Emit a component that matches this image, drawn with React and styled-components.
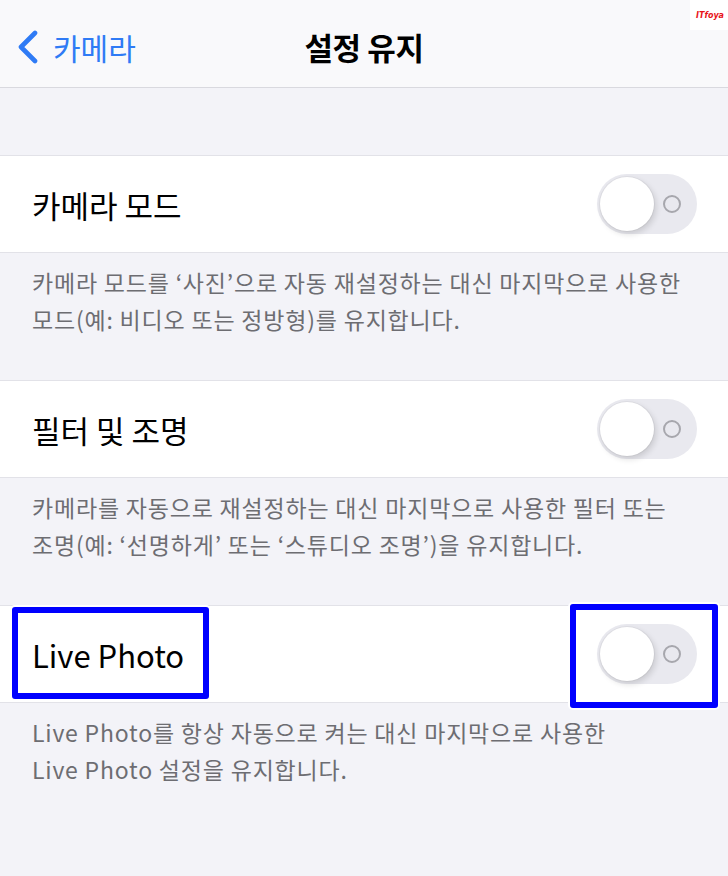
import React from 'react';
import styled, { createGlobalStyle } from 'styled-components';

const GlobalStyle = createGlobalStyle`
  html, body {
    margin: 0;
    padding: 0;
    background: #f3f3f8;
  }
  body {
    font-family: "Noto Sans CJK KR", "Noto Sans", sans-serif;
    -webkit-font-smoothing: antialiased;
  }
`;

const Page = styled.div`
  width: 728px;
  height: 876px;
  overflow: hidden;
  background: #f3f3f8;
  position: relative;
`;

const NavBar = styled.header`
  height: 88px;
  box-sizing: border-box;
  padding-top: 6px;
  display: grid;
  grid-template-columns: 1fr auto 1fr;
  align-items: center;
  background: #f9f9fb;
  border-bottom: 1px solid #d9d9df;
`;

const BackButton = styled.div`
  display: flex;
  align-items: center;
  gap: 14px;
  padding-left: 17px;
  color: #2f7bf5;
  font-size: 30px;
  letter-spacing: 0;
`;

const Title = styled.h1`
  margin: 0;
  font-size: 31px;
  font-weight: 600;
  letter-spacing: -0.4px;
  color: #000;
`;

const Watermark = styled.div`
  position: absolute;
  top: 0;
  right: 0;
  width: 38px;
  height: 30px;
  background: #fff;
  color: #e8141a;
  font-family: "DejaVu Sans", sans-serif;
  font-style: italic;
  font-weight: bold;
  font-size: 8px;
  text-align: right;
  padding: 11px 4px 0 0;
  box-sizing: border-box;
`;

const Spacer = styled.div`
  height: 67px;
`;

const Row = styled.div`
  position: relative;
  height: 96px;
  display: flex;
  align-items: center;
  justify-content: space-between;
  padding: 0 31px 0 32px;
  background: #fff;
  border-top: 1px solid #e2e2e8;
  border-bottom: 1px solid #e2e2e8;
`;

const Label = styled.span`
  font-size: 31px;
  letter-spacing: 0;
  color: #000;
`;

const Track = styled.div`
  width: 100px;
  height: 60px;
  box-sizing: border-box;
  border-radius: 30px;
  background: #e9e9ef;
  display: flex;
  align-items: center;
  padding: 0 3px;
`;

const Knob = styled.div`
  width: 54px;
  height: 54px;
  border-radius: 50%;
  background: #fff;
  box-shadow: 0 0 0 1px rgba(0, 0, 0, 0.04), 2px 3px 6px rgba(0, 0, 0, 0.14);
`;

const Ring = styled.div`
  width: 14px;
  height: 14px;
  margin-left: 9px;
  border-radius: 50%;
  border: 2px solid #a7a7ad;
`;

const Footer = styled.p`
  margin: 0;
  padding: 11px 32px 42px;
  font-size: 23px;
  line-height: 37px;
  letter-spacing: 0.8px;
  color: #6d6d72;
  white-space: nowrap;
`;

const Highlight = styled.div`
  position: absolute;
  box-sizing: border-box;
  border: 6px solid #0000ff;
  border-radius: 3px;
  box-shadow: 0 0 0 2px #fff;
  pointer-events: none;
  left: ${p => p.$left}px;
  top: ${p => p.$top}px;
  width: ${p => p.$width}px;
  height: ${p => p.$height}px;
`;

const Chevron = () => (
  <svg width="22" height="34" viewBox="0 0 22 34">
    <polyline
      points="18,3 4,17 18,31"
      fill="none"
      stroke="#2f7bf5"
      strokeWidth="4.6"
      strokeLinecap="round"
      strokeLinejoin="round"
    />
  </svg>
);

const Toggle = () => (
  <Track>
    <Knob />
    <Ring />
  </Track>
);

const settings = [
  {
    label: '카메라 모드',
    lines: ['카메라 모드를 ‘사진’으로 자동 재설정하는 대신 마지막으로 사용한', '모드(예: 비디오 또는 정방형)를 유지합니다.'],
  },
  {
    label: '필터 및 조명',
    lines: ['카메라를 자동으로 재설정하는 대신 마지막으로 사용한 필터 또는', '조명(예: ‘선명하게’ 또는 ‘스튜디오 조명’)을 유지합니다.'],
  },
  {
    label: 'Live Photo',
    marked: true,
    lines: ['Live Photo를 항상 자동으로 켜는 대신 마지막으로 사용한', 'Live Photo 설정을 유지합니다.'],
  },
];

export default function App() {
  return (
    <Page>
      <GlobalStyle />
      <NavBar>
        <BackButton>
          <Chevron />
          <span>카메라</span>
        </BackButton>
        <Title>설정 유지</Title>
        <div />
      </NavBar>
      <Watermark>ITfoya</Watermark>
      <Spacer />
      {settings.map(s => (
        <React.Fragment key={s.label}>
          <Row>
            <Label>{s.label}</Label>
            <Toggle />
            {s.marked && (
              <>
                <Highlight $left={12} $top={1} $width={197} $height={92} />
                <Highlight $left={570} $top={-2} $width={148} $height={104} />
              </>
            )}
          </Row>
          <Footer>
            {s.lines[0]}
            <br />
            {s.lines[1]}
          </Footer>
        </React.Fragment>
      ))}
    </Page>
  );
}
